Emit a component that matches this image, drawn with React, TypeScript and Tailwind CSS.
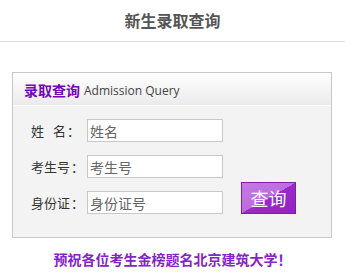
import React from "react";

const font = { fontFamily: '"Microsoft YaHei", "Noto Sans CJK SC", "Noto Sans", sans-serif' };

function Row({ label, placeholder }: { label: React.ReactNode; placeholder: string }) {
  return (
    <div className="flex items-center h-[23px]">
      <div className="w-[56px] text-[13px] text-[#333] leading-none whitespace-nowrap">{label}</div>
      <div className="w-[136px] h-[23px] border border-[#c8c8c8] bg-white flex items-center pl-[2px] text-[14px] text-[#666] leading-none">
        {placeholder}
      </div>
    </div>
  );
}

export default function App() {
  return (
    <div className="w-[345px] h-[276px] bg-white overflow-hidden" style={font}>
      <div className="h-[42px] border-b border-[#dcdcdc] flex items-center justify-center pb-[1px] text-[16px] font-bold text-[#555]">
        新生录取查询
      </div>
      <div className="mt-[30px] ml-[12px] w-[320px] border border-[#c8c8c8]">
        <div className="h-[33px] border-b border-white bg-gradient-to-b from-white to-[#ebebeb] flex items-center pl-[11px] pt-[3px]">
          <span className="text-[14px] font-bold text-[#7406b4]">录取查询</span>
          <span className="ml-[4px] text-[12px] text-[#444]" style={{ fontFamily: '"Segoe UI", "Open Sans", "Noto Sans", sans-serif' }}>
            Admission Query
          </span>
        </div>
        <div className="bg-[#f3f3f3] pt-[13px] pb-[23px] pl-[18px] flex">
          <div className="flex flex-col gap-[13px]">
            <Row
              label={
                <span>
                  姓<span className="inline-block w-[9px]" />名<span className="ml-[1px]">：</span>
                </span>
              }
              placeholder="姓名"
            />
            <Row label={<span>考生号<span className="ml-[1px]">：</span></span>} placeholder="考生号" />
            <Row label={<span>身份证<span className="ml-[1px]">：</span></span>} placeholder="身份证号" />
          </div>
          <button
            className="ml-[18px] self-end w-[55px] h-[32px] border border-[#7d1fa6] text-white text-[18px] leading-none flex items-center justify-center"
            style={{ backgroundImage: "linear-gradient(to bottom right, #c57ae3 0%, #bd6cdf 50%, #9a2ac8 50%, #9424c2 100%)" }}
          >
            查询
          </button>
        </div>
      </div>
      <div className="mt-[11px] text-center text-[14px] font-bold text-[#8424c8]">预祝各位考生金榜题名北京建筑大学！</div>
    </div>
  );
}
